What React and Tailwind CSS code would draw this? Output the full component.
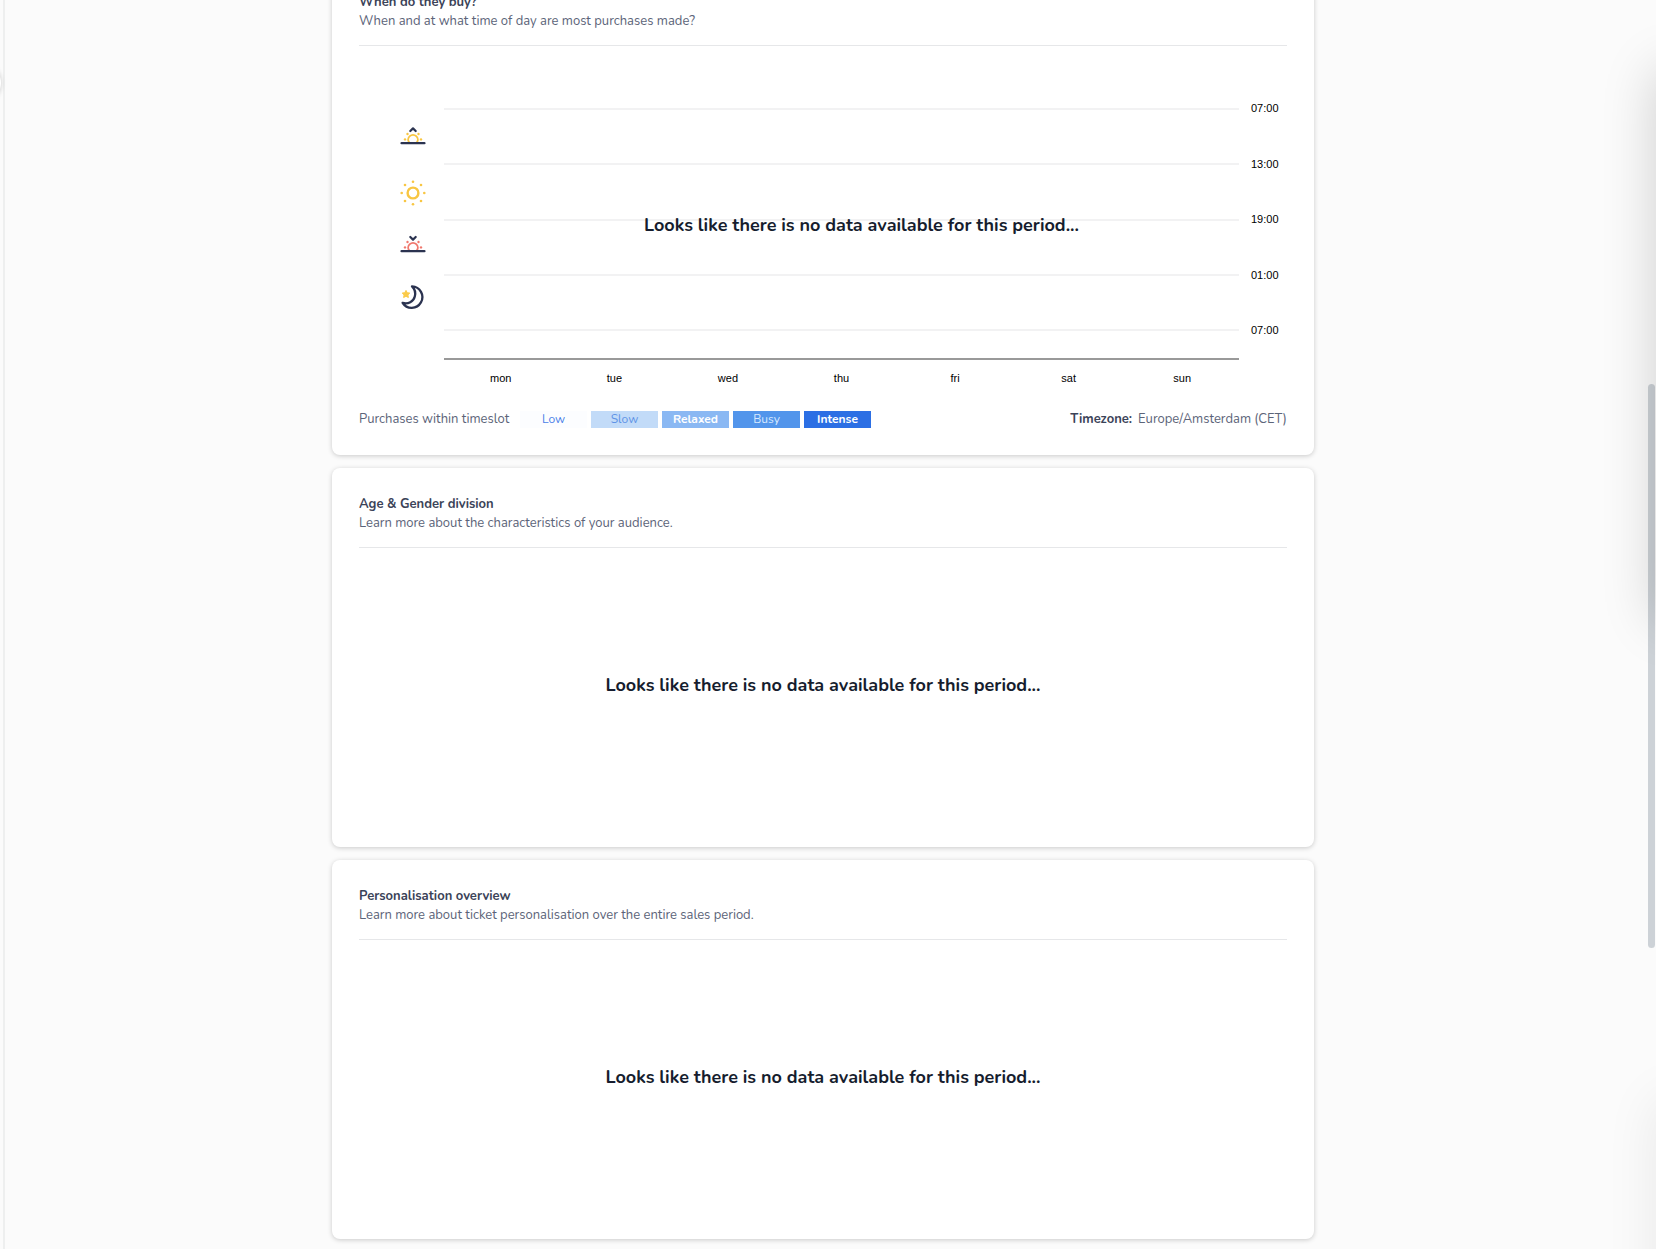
import React from 'react';

const NAVY = '#2b3350';

const days = ['mon', 'tue', 'wed', 'thu', 'fri', 'sat', 'sun'];
const hours = ['07:00', '13:00', '19:00', '01:00', '07:00'];

const legend = [
    { label: 'Low', style: 'bg-[#fcfdff] text-[#4a7fe8]' },
    { label: 'Slow', style: 'bg-[#c2dbf8] text-[#5f93e6]' },
    { label: 'Relaxed', style: 'bg-[#8ab8f3] text-white font-bold' },
    { label: 'Busy', style: 'bg-[#5295eb] text-[#d6e8ff]' },
    { label: 'Intense', style: 'bg-[#2c6fe4] text-white font-bold' },
];

const HorizonSun = ({ color, chevron }) => (
    <svg className="h-[26px] w-[26px]" viewBox="0 0 26 26" fill="none" strokeLinecap="round" strokeLinejoin="round">
        <path d={chevron} stroke={NAVY} strokeWidth="2.2" />
        <path d="M9.2 19.6a4.8 4.8 0 1 1 7.6 0" stroke={color} strokeWidth="1.9" />
        <g fill={color}>
            <circle cx="5" cy="16.4" r="1.2" />
            <circle cx="7.5" cy="11" r="1.2" />
            <circle cx="18.5" cy="11" r="1.2" />
            <circle cx="21" cy="16.4" r="1.2" />
        </g>
        <path d="M1.5 20.2h23" stroke={NAVY} strokeWidth="2.2" />
    </svg>
);

const Sun = () => (
    <svg className="h-[26px] w-[26px]" viewBox="0 0 26 26" fill="none">
        <circle cx="13" cy="13" r="5.4" stroke="#f8c643" strokeWidth="2.4" />
        <g fill="#f8c643">
            <circle cx="13" cy="1.8" r="1.3" />
            <circle cx="21" cy="5" r="1.3" />
            <circle cx="24.3" cy="13" r="1.3" />
            <circle cx="21" cy="21" r="1.3" />
            <circle cx="13" cy="24.3" r="1.3" />
            <circle cx="5" cy="21" r="1.3" />
            <circle cx="1.7" cy="13" r="1.3" />
            <circle cx="5" cy="5" r="1.3" />
        </g>
    </svg>
);

const Moon = () => (
    <svg className="h-[26px] w-[26px]" viewBox="0 0 26 26" fill="none" strokeLinejoin="round">
        <path
            d="M12 2.4A10.7 10.7 0 1 1 2.6 18.8C8 20.6 13.6 17.6 14.8 12.6C15.7 9 14.8 5 12 2.4Z"
            stroke={NAVY}
            strokeWidth="2.3"
        />
        <path
            d="M6 6.4l1.2 2.3 2.6.4-1.9 1.8.5 2.6L6 12.3l-2.4 1.2.5-2.6-1.9-1.8 2.6-.4z"
            fill="#fbcb4a"
            stroke="#fbcb4a"
        />
    </svg>
);

const Card = ({ title, subtitle, children }) => (
    <section className="rounded-lg bg-white px-[27px] pt-[27px] shadow-[0_1px_5px_rgba(0,0,0,0.2)]">
        <header className="border-b border-[#e6e7e9] pb-[14px]">
            <h2 className="text-[13px] leading-[19px] font-bold text-[#3b4358]">{title}</h2>
            <p className="text-[13px] leading-[19px] text-[#5c6479]">{subtitle}</p>
        </header>
        {children}
    </section>
);

const NoData = () => (
    <p className="text-center text-lg leading-6 font-bold text-[#161d2e]">
        Looks like there is no data available for this period...
    </p>
);

const EmptyBody = () => (
    <div className="flex h-[299px] items-center justify-center pb-[26px]">
        <NoData />
    </div>
);

const PurchaseTimes = () => (
    <>
        <div className="relative flex pt-[35px]">
            <div className="flex w-[85px] flex-col items-end pt-[42px] pr-[18px]">
                <HorizonSun color="#f8c643" chevron="M10.3 8 13 5.4 15.7 8" />
                <div className="mt-[31px]"><Sun /></div>
                <div className="mt-[25px]"><HorizonSun color="#f0796f" chevron="M10.3 6 13 8.6 15.7 6" /></div>
                <div className="mt-[27px]"><Moon /></div>
            </div>
            <div className="flex-1">
                <div className="border-b-2 border-[#999]">
                    <ul className="-mr-[48px] flex h-[277px] flex-col font-['Liberation_Sans',Arial,sans-serif] text-[11px] text-black">
                        {hours.map((hour, i) => (
                            <li key={i} className="flex flex-1 items-center gap-3">
                                <span className="h-[2px] flex-1 bg-[#f2f2f3]" />
                                <span className="w-9">{hour}</span>
                            </li>
                        ))}
                    </ul>
                </div>
                <ul className="mt-[10px] grid grid-cols-7 text-center font-['Liberation_Sans',Arial,sans-serif] text-[11px] leading-4 text-black">
                    {days.map((day) => (
                        <li key={day}>{day}</li>
                    ))}
                </ul>
            </div>
            <div className="w-12" />
            <div className="absolute top-[167px] right-0 left-[77px]">
                <NoData />
            </div>
        </div>
        <footer className="flex items-center justify-between pt-[23px] pb-[26px] text-[13px] leading-5 text-[#5c6479]">
            <div className="flex items-center">
                <span className="w-[161px]">Purchases within timeslot</span>
                <ul className="flex gap-1">
                    {legend.map(({ label, style }) => (
                        <li key={label} className={`w-[67px] text-center text-xs leading-[17px] ${style}`}>
                            {label}
                        </li>
                    ))}
                </ul>
            </div>
            <p>
                <strong className="mr-[6px] text-[#3b4358]">Timezone:</strong>
                Europe/Amsterdam (CET)
            </p>
        </footer>
    </>
);

const App = () => (
    <div className="relative flex min-h-screen overflow-hidden bg-[#fbfbfb] font-['Nunito','Lato',sans-serif]">
        <aside className="w-[5px] border-r-2 border-[#eeefef] bg-[#fbfbfb]" />
        <main className="mx-auto -mt-[34px] flex max-w-[982px] flex-1 flex-col gap-[13px]">
            <Card title="When do they buy?" subtitle="When and at what time of day are most purchases made?">
                <PurchaseTimes />
            </Card>
            <Card title="Age & Gender division" subtitle="Learn more about the characteristics of your audience.">
                <EmptyBody />
            </Card>
            <Card title="Personalisation overview" subtitle="Learn more about ticket personalisation over the entire sales period.">
                <EmptyBody />
            </Card>
        </main>
        <div className="w-[15px] pt-[384px] pl-[7px]">
            <div className="h-[564px] w-[7px] rounded-full bg-[#cdd2d7]" />
        </div>
        {/* drawers parked just outside the right edge, only their shadows show */}
        <div className="absolute top-[70px] left-full h-[550px] w-[300px] shadow-[0_0_50px_rgba(0,0,0,0.18)]" />
        <div className="absolute top-[1100px] left-full h-[400px] w-[300px] shadow-[0_0_50px_rgba(0,0,0,0.08)]" />
        <div className="absolute top-[63px] -left-[39px] size-10 rounded-full bg-white shadow-[0_0_5px_rgba(0,0,0,0.2)]" />
    </div>
);

export default App;
